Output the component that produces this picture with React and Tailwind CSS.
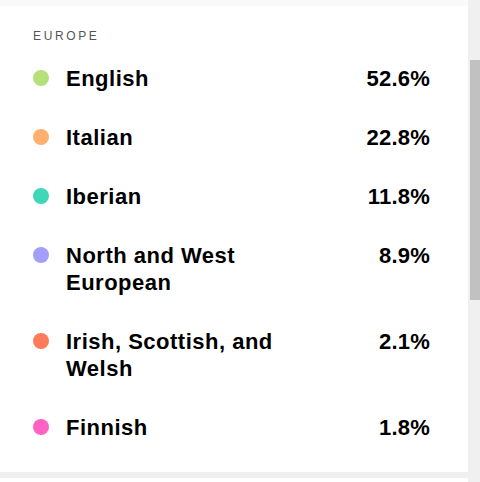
import React from "react";

const regions = [
  { name: "English", pct: "52.6%", color: "bg-[#b6e07a]" },
  { name: "Italian", pct: "22.8%", color: "bg-[#ffb06e]" },
  { name: "Iberian", pct: "11.8%", color: "bg-[#3ed8b8]" },
  { name: "North and West European", pct: "8.9%", color: "bg-[#a39dfc]" },
  { name: "Irish, Scottish, and Welsh", pct: "2.1%", color: "bg-[#ff7b5a]" },
  { name: "Finnish", pct: "1.8%", color: "bg-[#ff62c4]" },
];

const App = () => {
  return (
    <div
      className="flex h-[482px] w-[480px] overflow-hidden bg-[#f0f0f0]"
      style={{ fontFamily: '"Liberation Sans", Arial, sans-serif' }}
    >
      <div className="flex w-[468px] flex-col">
        <div className="h-[6px] bg-[#fafafa]" />

        <div className="bg-white pt-[22px] pb-[31px] pl-[33px] pr-[38px]">
          <h4 className="text-[12px] leading-[16px] uppercase tracking-[0.22em] text-[#555]">
            Europe
          </h4>

          <div className="mt-[21px] flex flex-col gap-y-[32px]">
            {regions.map((r) => (
              <div key={r.name} className="flex items-start">
                <span
                  className={`mt-[5px] h-4 w-4 shrink-0 rounded-full ${r.color}`}
                />
                <span className="ml-[17px] w-[240px] text-[22px] font-bold leading-[27px] tracking-[0.5px] text-black">
                  {r.name}
                </span>
                <span className="flex-1 text-right text-[22px] font-bold leading-[27px] tracking-[0.2px] text-black">
                  {r.pct}
                </span>
              </div>
            ))}
          </div>
        </div>

        <div className="mt-[6px] flex-1 bg-white" />
      </div>

      <div className="flex w-[12px] flex-col bg-[#f0f0f0]">
        <div className="mt-[60px] ml-[2px] h-[240px] w-[10px] bg-[#c1c1c1]" />
      </div>
    </div>
  );
};

export default App;
